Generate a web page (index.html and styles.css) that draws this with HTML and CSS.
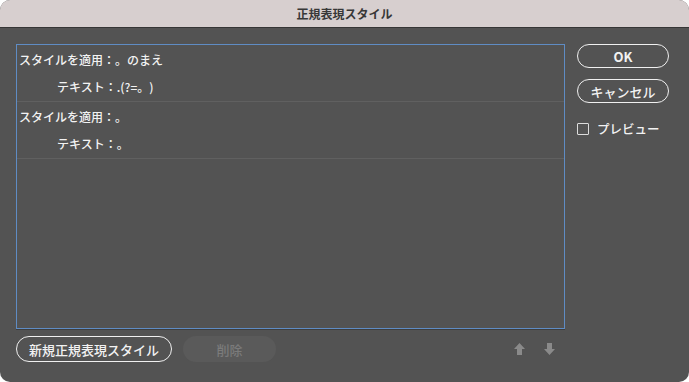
FILE: index.html
```html
<!DOCTYPE html>
<html lang="ja">
<head>
    <meta charset="UTF-8">
    <meta name="viewport" content="width=device-width, initial-scale=1.0">
    <title>正規表現スタイル</title>
    <link rel="stylesheet" href="styles.css">
</head>
<body>
    <div class="window">
        <div class="titlebar">正規表現スタイル</div>
        <div class="content">
            <div class="main">
                <div class="list">
                    <div class="row">
                        <div class="line">スタイルを適用：。のまえ</div>
                        <div class="line sub">テキスト：.(?=。)</div>
                    </div>
                    <div class="row">
                        <div class="line">スタイルを適用：。</div>
                        <div class="line sub">テキスト：。</div>
                    </div>
                </div>
                <div class="footer">
                    <button class="btn">新規正規表現スタイル</button>
                    <button class="btn disabled">削除</button>
                    <div class="arrows">
                        <svg width="11" height="12" viewBox="0 0 11 12"><polygon points="5.5,0 11,6 8,6 8,12 3,12 3,6 0,6"/></svg>
                        <svg width="11" height="12" viewBox="0 0 11 12"><polygon points="5.5,12 11,6 8,6 8,0 3,0 3,6 0,6"/></svg>
                    </div>
                </div>
            </div>
            <div class="side">
                <button class="btn ok">OK</button>
                <button class="btn">キャンセル</button>
                <label class="check"><span class="box"></span>プレビュー</label>
            </div>
        </div>
    </div>
</body>
</html>
```

FILE: styles.css
```css
body {
    margin: 0;
    background: #ffffff;
    font-family: "Noto Sans CJK JP", "Noto Sans", sans-serif;
    text-spacing-trim: space-all;
}
.window {
    width: 689px;
    height: 382px;
    border-radius: 10px;
    overflow: hidden;
    background: #535353;
    display: flex;
    flex-direction: column;
}
.titlebar {
    height: 27px;
    line-height: 27px;
    background: #d7cfcf;
    border-bottom: 1px solid #363636;
    text-align: center;
    font-size: 12px;
    font-weight: bold;
    color: #383838;
}
.content {
    display: flex;
    padding: 16px 20px 0 16px;
    gap: 12px;
}
.main {
    width: 549px;
    display: flex;
    flex-direction: column;
}
.list {
    height: 283px;
    border: 1px solid #5f8cc4;
    box-shadow: 0 1px 0 #3e3e3e;
}
.row {
    height: 55px;
    padding-top: 1px;
    border-bottom: 1px solid #606060;
}
.line {
    height: 27px;
    line-height: 27px;
    padding-left: 2px;
    font-size: 12px;
    font-weight: 500;
    color: #f2f2f2;
}
.line.sub {
    padding-left: 40px;
}
.footer {
    display: flex;
    align-items: center;
    margin-top: 7px;
    gap: 11px;
}
.btn {
    box-sizing: border-box;
    height: 26px;
    padding: 0 12px;
    border: 1.5px solid #f0f0f0;
    border-radius: 13px;
    background: transparent;
    color: #f2f2f2;
    font-family: inherit;
    font-size: 13px;
    font-weight: 500;
}
.btn.disabled {
    width: 93px;
    border-color: transparent;
    background: #5a5a5a;
    color: #7b7b7b;
}
.arrows {
    display: flex;
    gap: 19px;
    margin-left: auto;
    margin-right: 10px;
    fill: #8a8a8a;
}
.side {
    width: 92px;
    display: flex;
    flex-direction: column;
    gap: 11px;
}
.side .btn {
    width: 92px;
    height: 24px;
    padding: 0;
}
.btn.ok {
    font-weight: bold;
}
.check {
    display: flex;
    align-items: center;
    gap: 8px;
    margin-top: 5px;
    font-size: 12.5px;
    font-weight: 500;
    color: #f2f2f2;
}
.box {
    width: 10px;
    height: 10px;
    border: 1px solid #dcdcdc;
    border-radius: 1px;
}
```
